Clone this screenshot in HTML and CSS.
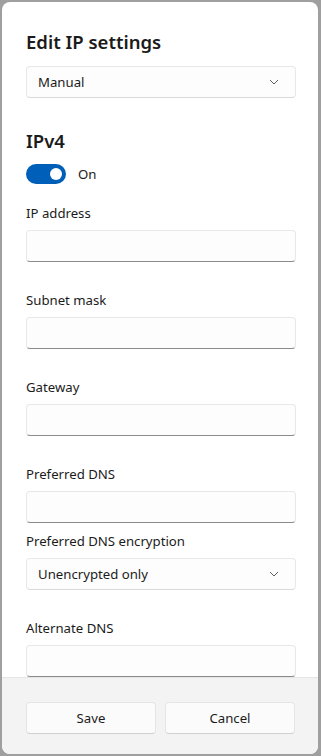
FILE: index.html
```html
<!DOCTYPE html>
<html lang="en">
<head>
    <meta charset="UTF-8">
    <meta name="viewport" content="width=device-width, initial-scale=1.0">
    <title>Edit IP settings</title>
    <link rel="stylesheet" href="styles.css">
</head>
<body>
    <div class="dialog">
        <div class="content">
            <h1 class="title">Edit IP settings</h1>
            <div class="select first">
                <span>Manual</span>
                <svg class="chevron" width="10" height="6" viewBox="0 0 10 6"><path d="M1 1 L5 5 L9 1" fill="none" stroke="#5f5f5f" stroke-width="1"/></svg>
            </div>

            <h2 class="section">IPv4</h2>
            <div class="toggle-row">
                <span class="toggle"><span class="knob"></span></span>
                <span class="toggle-label">On</span>
            </div>

            <div class="field">
                <label class="field-label">IP address</label>
                <div class="input"></div>
            </div>
            <div class="field">
                <label class="field-label">Subnet mask</label>
                <div class="input"></div>
            </div>
            <div class="field">
                <label class="field-label">Gateway</label>
                <div class="input"></div>
            </div>
            <div class="field">
                <label class="field-label">Preferred DNS</label>
                <div class="input"></div>
            </div>
            <div class="field tight">
                <label class="field-label">Preferred DNS encryption</label>
                <div class="select">
                    <span>Unencrypted only</span>
                    <svg class="chevron" width="10" height="6" viewBox="0 0 10 6"><path d="M1 1 L5 5 L9 1" fill="none" stroke="#5f5f5f" stroke-width="1"/></svg>
                </div>
            </div>
            <div class="field">
                <label class="field-label">Alternate DNS</label>
                <div class="input"></div>
            </div>
        </div>

        <div class="footer">
            <button class="btn">Save</button>
            <button class="btn">Cancel</button>
        </div>
    </div>
</body>
</html>
```

FILE: styles.css
```css
body {
    margin: 0;
    background: #9f9f9f;
    font-family: "Noto Sans", "Open Sans", sans-serif;
    color: #1b1b1b;
}
.dialog {
    width: 316px;
    height: 752px;
    margin: 2px 3px 2px 2px;
    background: white;
    border-radius: 8px;
    overflow: hidden;
    display: flex;
    flex-direction: column;
}
.content {
    flex: 1;
    overflow: hidden;
    padding: 26px 22px 0 24px;
}
.title {
    margin: 0;
    font-size: 18.5px;
    font-weight: 600;
    line-height: 28px;
}
.select {
    height: 30px;
    border: 1px solid #e8e8e8;
    border-bottom-color: #dadada;
    border-radius: 4px;
    background: #fdfdfd;
    display: flex;
    align-items: center;
    justify-content: space-between;
    padding: 0 16px 0 11px;
    font-size: 13.2px;
}
.select.first {
    margin-top: 10px;
}
.chevron {
    display: block;
}
.section {
    margin: 29px 0 0 0;
    font-size: 18.5px;
    font-weight: 600;
    line-height: 28px;
}
.toggle-row {
    display: flex;
    align-items: center;
    margin-top: 9px;
    height: 20px;
}
.toggle {
    width: 40px;
    height: 20px;
    border-radius: 10px;
    background: #005fb8;
    position: relative;
}
.knob {
    position: absolute;
    top: 4px;
    right: 4px;
    width: 12px;
    height: 12px;
    border-radius: 50%;
    background: white;
}
.toggle-label {
    margin-left: 12px;
    font-size: 13.2px;
}
.field {
    margin-top: 28px;
}
.toggle-row + .field {
    margin-top: 19px;
}
.field.tight {
    margin-top: 8px;
}
.field-label {
    display: block;
    font-size: 13.2px;
    line-height: 20px;
    margin-bottom: 7px;
}
.input {
    height: 30px;
    border: 1px solid #e8e8e8;
    border-bottom-color: #8b8b8b;
    border-radius: 4px;
    background: #fdfdfd;
}
.footer {
    height: 77px;
    border-top: 1px solid #e5e5e5;
    background: #f3f3f3;
    display: flex;
    gap: 9px;
    padding: 24px 22px 0 24px;
    box-sizing: border-box;
}
.btn {
    width: 130px;
    height: 32px;
    border: 1px solid #e5e5e5;
    border-bottom-color: #d0d0d0;
    border-radius: 4px;
    background: #fbfbfb;
    font-family: inherit;
    font-size: 13.2px;
    color: #1b1b1b;
}
```
